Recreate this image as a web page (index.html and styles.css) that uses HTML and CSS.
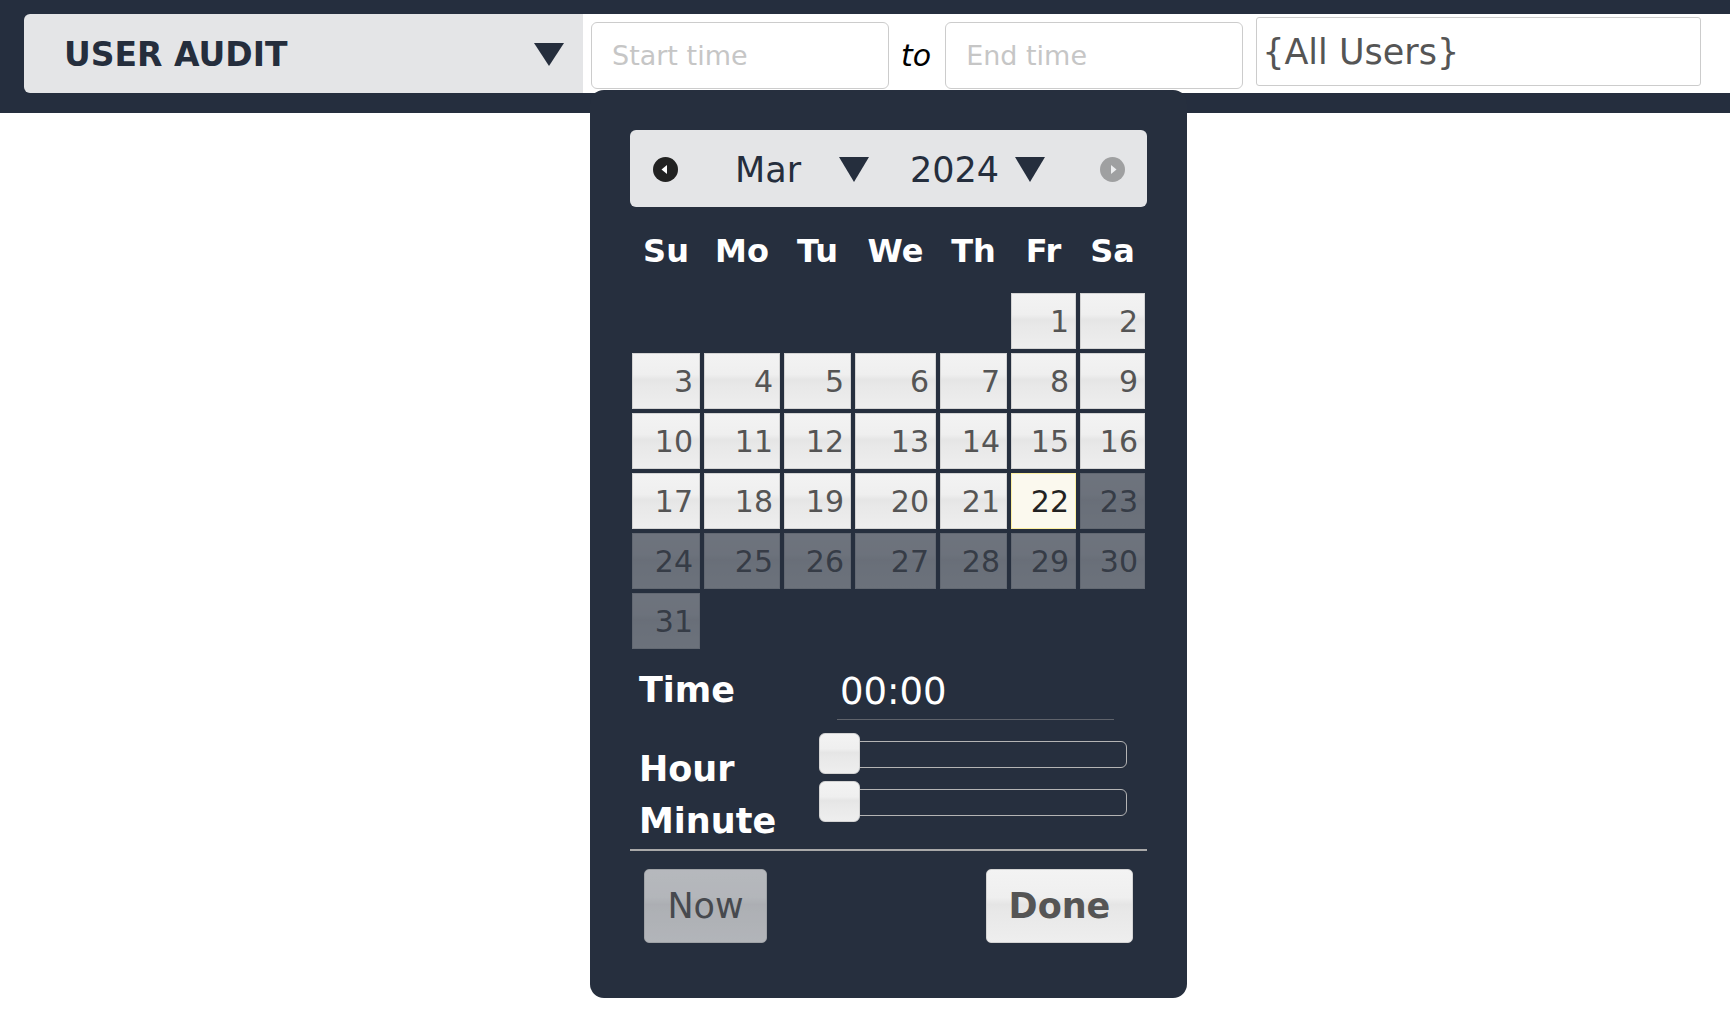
FILE: index.html
```html
<!DOCTYPE html>
<html lang="en">
<head>
    <meta charset="UTF-8">
    <title>User Audit</title>
    <link rel="stylesheet" href="styles.css">
</head>
<body>
    <header class="toolbar">
        <div class="report-select">
            <span class="report-name">USER AUDIT</span>
            <svg class="caret caret-report" viewBox="0 0 30 23"><polygon points="0,0 30,0 15,23"/></svg>
        </div>
        <div class="filters">
            <input type="text" class="time-input" placeholder="Start time">
            <span class="to">to</span>
            <input type="text" class="time-input" placeholder="End time">
            <input type="text" class="user-input" value="{All Users}">
        </div>
    </header>

    <div class="datepicker">
        <div class="dp-header">
            <svg class="nav-icon nav-prev" viewBox="0 0 25 25">
                <circle cx="12.5" cy="12.5" r="12.5"/>
                <polygon points="8.5,12.5 14,8 14,17" fill="#fff"/>
            </svg>
            <span class="dp-month">Mar</span>
            <svg class="caret caret-month" viewBox="0 0 30 25"><polygon points="0,0 30,0 15,25"/></svg>
            <span class="dp-year">2024</span>
            <svg class="caret caret-year" viewBox="0 0 30 25"><polygon points="0,0 30,0 15,25"/></svg>
            <svg class="nav-icon nav-next" viewBox="0 0 25 25">
                <circle cx="12.5" cy="12.5" r="12.5"/>
                <polygon points="16.5,12.5 11,8 11,17" fill="#fff"/>
            </svg>
        </div>

        <div class="dp-weekdays">
            <span>Su</span><span>Mo</span><span>Tu</span><span>We</span><span>Th</span><span>Fr</span><span>Sa</span>
        </div>

        <div class="dp-days">
            <span></span><span></span><span></span><span></span><span></span>
            <a class="day">1</a><a class="day">2</a>
            <a class="day">3</a><a class="day">4</a><a class="day">5</a><a class="day">6</a><a class="day">7</a><a class="day">8</a><a class="day">9</a>
            <a class="day">10</a><a class="day">11</a><a class="day">12</a><a class="day">13</a><a class="day">14</a><a class="day">15</a><a class="day">16</a>
            <a class="day">17</a><a class="day">18</a><a class="day">19</a><a class="day">20</a><a class="day">21</a><a class="day today">22</a><a class="day disabled">23</a>
            <a class="day disabled">24</a><a class="day disabled">25</a><a class="day disabled">26</a><a class="day disabled">27</a><a class="day disabled">28</a><a class="day disabled">29</a><a class="day disabled">30</a>
            <a class="day disabled">31</a>
        </div>

        <div class="dp-time">
            <div class="time-labels">
                <div class="time-label time-label-main">Time</div>
                <div class="time-label">Hour</div>
                <div class="time-label">Minute</div>
            </div>
            <div class="time-controls">
                <div class="time-value">00:00</div>
                <div class="slider"><span class="slider-handle"></span></div>
                <div class="slider"><span class="slider-handle"></span></div>
            </div>
        </div>

        <div class="dp-buttons">
            <button class="dp-btn secondary">Now</button>
            <button class="dp-btn primary">Done</button>
        </div>
    </div>
</body>
</html>
```

FILE: styles.css
```css
body {
    margin: 0;
    background-color: #ffffff;
    font-family: "DejaVu Sans", Verdana, sans-serif;
}
.toolbar {
    display: flex;
    align-items: flex-start;
    height: 113px;
    box-sizing: border-box;
    padding: 14px 0 0 24px;
    background-color: #252e3e;
}
.report-select {
    display: flex;
    align-items: center;
    justify-content: space-between;
    width: 559px;
    height: 79px;
    box-sizing: border-box;
    padding: 2px 19px 0 40px;
    background-color: #e4e5e7;
    border-radius: 6px 0 0 6px;
}
.report-name {
    font-size: 33px;
    font-weight: bold;
    color: #252e3d;
}
.caret {
    fill: #252e3d;
}
.caret-report {
    width: 30px;
    height: 23px;
}
.filters {
    flex: 1;
    display: flex;
    align-items: flex-start;
    height: 79px;
    padding-left: 8px;
    background-color: #ffffff;
}
.time-input {
    width: 298px;
    height: 67px;
    margin-top: 8px;
    box-sizing: border-box;
    padding: 0 0 0 20px;
    font-family: inherit;
    font-size: 27px;
    color: #555555;
    border: 1px solid #cccccc;
    border-radius: 6px;
    outline: none;
}
.time-input::placeholder {
    color: #c6c6c6;
}
.to {
    margin: 8px 14px 0 12px;
    line-height: 67px;
    font-size: 30px;
    font-style: italic;
    color: #000000;
}
.user-input {
    width: 445px;
    height: 69px;
    margin: 3px 0 0 13px;
    box-sizing: border-box;
    padding: 0 0 0 5px;
    font-family: inherit;
    font-size: 35px;
    color: #555555;
    border: 1px solid #cccccc;
    border-radius: 3px;
    outline: none;
}

/* date picker popup */
.datepicker {
    position: absolute;
    left: 590px;
    top: 90px;
    width: 597px;
    box-sizing: border-box;
    padding: 40px 40px 55px;
    background-color: #262f3e;
    border-radius: 14px;
}
.dp-header {
    display: flex;
    align-items: center;
    height: 77px;
    padding-top: 2px;
    box-sizing: border-box;
    background-color: #e4e5e7;
    border-radius: 6px;
    color: #252e3d;
    font-size: 35px;
}
.nav-icon {
    width: 25px;
    height: 25px;
    fill: #222222;
}
.nav-prev {
    margin-left: 23px;
}
.nav-next {
    margin: 0 22px 0 auto;
    opacity: 0.35;
}
.dp-month {
    margin-left: 57px;
}
.caret-month {
    width: 30px;
    height: 25px;
    margin-left: 38px;
}
.dp-year {
    margin-left: 41px;
}
.caret-year {
    width: 30px;
    height: 25px;
    margin-left: 16px;
}
.dp-weekdays,
.dp-days {
    display: grid;
    grid-template-columns: 68px 76px 67px 81px 67px 65px 65px;
    column-gap: 4px;
    margin: 0 2px;
}
.dp-weekdays {
    margin-top: 24px;
    line-height: 40px;
    font-size: 32px;
    font-weight: bold;
    color: #ffffff;
    text-align: center;
}
.dp-days {
    margin-top: 22px;
    grid-auto-rows: 56px;
    row-gap: 4px;
}
.day {
    display: flex;
    align-items: center;
    justify-content: flex-end;
    padding-right: 6px;
    font-size: 30px;
    color: #555555;
    border: 1px solid #d3d3d3;
    background: linear-gradient(#f3f3f3 0%, #efefef 38%, #e5e5e5 48%, #e8e8e8 58%, #eeeeee 100%);
    cursor: pointer;
}
.day.today {
    color: #222222;
    border-color: #fcefa1;
    background: #fbf9ee;
}
.day.disabled {
    opacity: 0.35;
    cursor: default;
}

/* time controls */
.dp-time {
    display: flex;
    margin-top: 15px;
}
.time-labels {
    width: 189px;
    box-sizing: border-box;
    padding-left: 9px;
}
.time-label {
    line-height: 52px;
    font-size: 35px;
    font-weight: bold;
    color: #ffffff;
}
.time-label-main {
    margin-bottom: 27px;
}
.time-controls {
    flex: 1;
    padding-top: 8px;
}
.time-value {
    width: 277px;
    margin-left: 18px;
    padding: 0 0 7px 3px;
    box-sizing: border-box;
    line-height: 40px;
    font-size: 37px;
    color: #ffffff;
    border-bottom: 1px solid #5f636b;
}
.slider {
    position: relative;
    width: 288px;
    height: 27px;
    margin: 21px 0 0 20px;
    box-sizing: border-box;
    border: 1px solid #b4b4b4;
    border-radius: 6px;
}
.slider-handle {
    position: absolute;
    left: -21px;
    top: -9px;
    width: 41px;
    height: 41px;
    box-sizing: border-box;
    border: 1px solid #d3d3d3;
    border-radius: 6px;
    background: linear-gradient(#f3f3f3 0%, #efefef 38%, #e5e5e5 48%, #e8e8e8 58%, #eeeeee 100%);
}
.dp-buttons {
    display: flex;
    justify-content: space-between;
    margin-top: 2px;
    padding: 18px 14px 0;
    border-top: 2px solid #a9a9a9;
}
.dp-btn {
    height: 74px;
    padding: 0;
    font-family: inherit;
    font-size: 35px;
    color: #555555;
    text-align: center;
    border: 1px solid #d3d3d3;
    border-radius: 5px;
    background: linear-gradient(#f3f3f3 0%, #efefef 38%, #e5e5e5 48%, #e8e8e8 58%, #eeeeee 100%);
    cursor: pointer;
}
.dp-btn.primary {
    width: 147px;
    font-weight: bold;
}
.dp-btn.secondary {
    width: 123px;
    opacity: 0.7;
}
```
